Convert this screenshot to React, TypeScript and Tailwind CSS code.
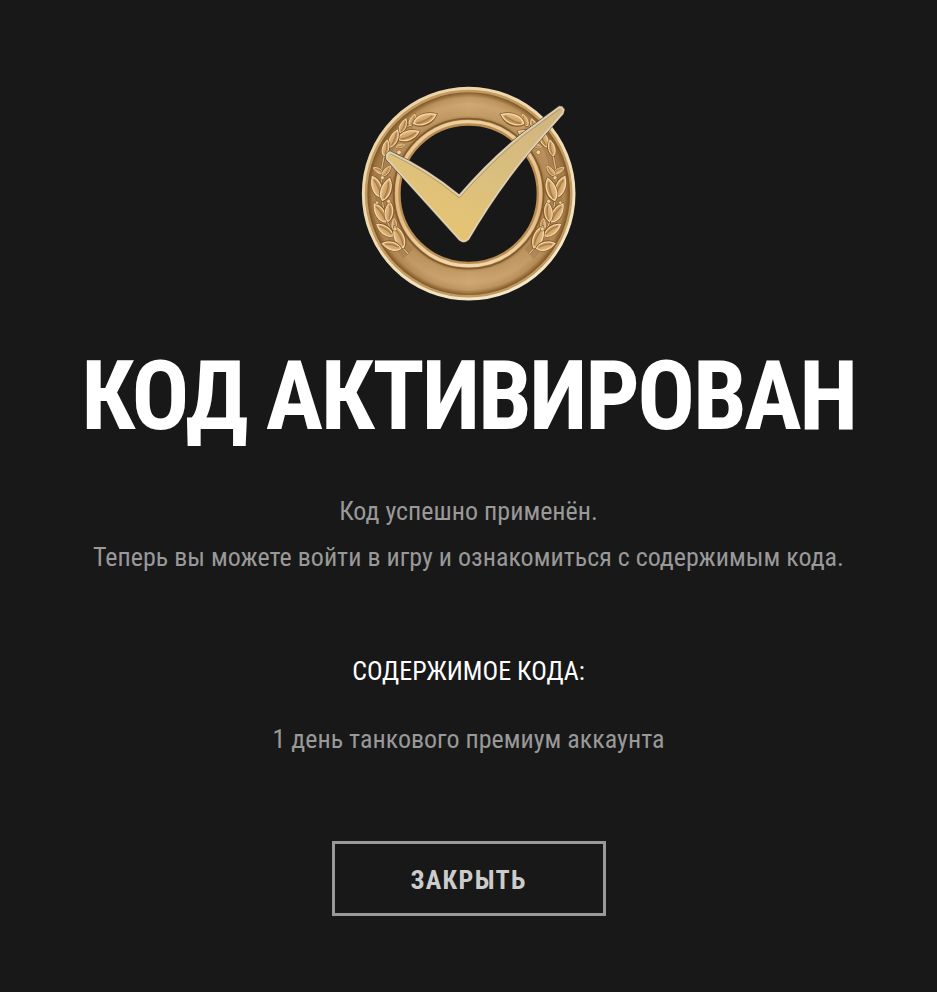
type Leaf = {
    angle: number;
    size: number;
    x: number;
    y: number;
};

const branchLeaves: Leaf[] = [
    { x: 186, y: 136, angle: -62, size: 0.6 },
    { x: 222, y: 133, angle: -18, size: 1.1 },
    { x: 158, y: 153, angle: -62, size: 0.7 },
    { x: 173, y: 182, angle: -16, size: 1.02 },
    { x: 130, y: 192, angle: -62, size: 0.86 },
    { x: 150, y: 213, angle: -10, size: 0.46 },
    { x: 106, y: 220, angle: -74, size: 0.74 },
    { x: 85, y: 287, angle: -146, size: 0.54 },
    { x: 108, y: 289, angle: -48, size: 0.6 },
    { x: 80, y: 337, angle: -108, size: 1.02 },
    { x: 107, y: 345, angle: -68, size: 1.06 },
    { x: 90, y: 415, angle: -118, size: 0.98 },
    { x: 116, y: 412, angle: -80, size: 0.88 },
    { x: 105, y: 466, angle: -140, size: 0.9 },
    { x: 132, y: 450, angle: -88, size: 0.6 },
    { x: 147, y: 488, angle: -108, size: 1.05 },
    { x: 125, y: 513, angle: -160, size: 0.88 }
];

const stemPath = 'M182 148 C125 175 96 230 93 300 C88 400 112 475 174 537';

const tickPath =
    'M119 231 Q232 283 327 362 Q416 258 515 178 L627 96 L634 97 L640 104 L637 115 Q585 174 541 225 Q440 345 354 492 Q342 505 328 494 Q222 376 110 252 Q105 236 119 231 Z';

const Branch = () => (
    <g>
        <path
            d={stemPath}
            fill="none"
            stroke="#805930"
            strokeWidth="40"
            strokeOpacity="0.25"
        />
        <path d={stemPath} fill="none" stroke="#76502a" strokeWidth="7" />
        <path d={stemPath} fill="none" stroke="#e2bd82" strokeWidth="4" />
        {branchLeaves.map((leaf) => (
            <g
                key={`${leaf.x}-${leaf.y}`}
                transform={`translate(${leaf.x} ${leaf.y}) rotate(${leaf.angle}) scale(${leaf.size})`}
            >
                <path
                    d="M-33 3 C-22 -18 10 -20 36 -3 C18 20 -14 22 -33 3 Z"
                    fill="#8a6234"
                    stroke="#84592b"
                    strokeWidth="5"
                />
                <path
                    d="M-31 2 C-20 -16 10 -18 34 -3 C18 15 -14 18 -31 2 Z"
                    fill="url(#leaf)"
                    stroke="#f2d6a4"
                    strokeWidth="4"
                />
                <path
                    d="M-24 4 C-8 6 10 3 24 -2"
                    fill="none"
                    stroke="#a87a44"
                    strokeWidth="4"
                />
            </g>
        ))}
        <g fill="#f0d09a" stroke="#8a6030" strokeWidth="2">
            <circle cx="146" cy="232" r="7" />
            <circle cx="96" cy="308" r="6" />
            <circle cx="115" cy="379" r="6" />
            <circle cx="80" cy="383" r="5" />
            <circle cx="134" cy="462" r="6" />
        </g>
    </g>
);

const Emblem = () => (
    <svg
        viewBox="32 33 645 645"
        className="size-[215px] shrink-0"
        aria-hidden="true"
    >
        <defs>
            <radialGradient
                id="band"
                gradientUnits="userSpaceOnUse"
                cx="355"
                cy="356"
                r="310"
            >
                <stop offset="0.71" stopColor="#9a713f" />
                <stop offset="0.76" stopColor="#c29a64" />
                <stop offset="0.86" stopColor="#cca672" />
                <stop offset="0.93" stopColor="#be955e" />
                <stop offset="0.97" stopColor="#8a6232" />
                <stop offset="1" stopColor="#6a4720" />
            </radialGradient>
            <linearGradient id="sides" x1="0" x2="1" y1="0" y2="0">
                <stop offset="0" stopColor="#7b4f1f" stopOpacity="0.28" />
                <stop offset="0.3" stopColor="#7b4f1f" stopOpacity="0.05" />
                <stop offset="0.5" stopColor="#e6bf86" stopOpacity="0.1" />
                <stop offset="0.75" stopColor="#7b4f1f" stopOpacity="0.05" />
                <stop offset="1" stopColor="#7b4f1f" stopOpacity="0.25" />
            </linearGradient>
            <linearGradient id="rim" x1="0.2" x2="0.8" y1="0" y2="1">
                <stop offset="0" stopColor="#ecd3a6" />
                <stop offset="0.5" stopColor="#efdcb4" />
                <stop offset="1" stopColor="#f3e9cd" />
            </linearGradient>
            <linearGradient id="innerRim" x1="0" x2="0" y1="0" y2="1">
                <stop offset="0" stopColor="#ecd0a0" />
                <stop offset="0.6" stopColor="#e0ba82" />
                <stop offset="1" stopColor="#f0d8ae" />
            </linearGradient>
            <linearGradient id="leaf" x1="0" x2="0" y1="0" y2="1">
                <stop offset="0" stopColor="#e3bc82" />
                <stop offset="1" stopColor="#bd8b50" />
            </linearGradient>
            <linearGradient
                id="tick"
                gradientUnits="userSpaceOnUse"
                x1="500"
                x2="340"
                y1="120"
                y2="500"
            >
                <stop offset="0" stopColor="#d2b67f" />
                <stop offset="0.5" stopColor="#dbbf7e" />
                <stop offset="1" stopColor="#e6c472" />
            </linearGradient>
        </defs>

        <g fill="none">
            <circle
                cx="355"
                cy="356"
                r="262"
                stroke="url(#band)"
                strokeWidth="96"
            />
            <circle
                cx="355"
                cy="356"
                r="262"
                stroke="url(#sides)"
                strokeWidth="96"
            />
            <circle
                cx="355"
                cy="356"
                r="311"
                stroke="#c39a60"
                strokeWidth="14"
            />
            <circle
                cx="355"
                cy="356"
                r="316"
                stroke="url(#rim)"
                strokeWidth="9"
            />
            <circle
                cx="355"
                cy="356"
                r="225"
                stroke="#835a2c"
                strokeWidth="5"
            />
            <circle
                cx="355"
                cy="356"
                r="213"
                stroke="#bb8c50"
                strokeWidth="18"
            />
            <circle
                cx="355"
                cy="356"
                r="216"
                stroke="url(#innerRim)"
                strokeWidth="10"
            />
        </g>

        <Branch />
        <g transform="translate(710 0) scale(-1 1)">
            <Branch />
        </g>

        <path d={tickPath} fill="none" stroke="#57432b" strokeWidth="8" />
        <path
            d={tickPath}
            fill="url(#tick)"
            stroke="#ddd2bd"
            strokeWidth="5"
        />
        <path
            d="M121 237 Q231 289 327 369 Q419 264 518 183 L628 102"
            fill="none"
            stroke="#9c8a6c"
            strokeWidth="2"
        />
    </svg>
);

export default function App() {
    return (
        <main className="flex min-h-screen flex-col items-center bg-[#181818] px-6 pt-[86px] pb-[76px] text-center font-['Roboto_Condensed','Liberation_Sans_Narrow',Roboto,sans-serif] text-[26px] leading-[46px] text-[#999999]">
            <Emblem />
            <h1 className="mt-[39px] text-[96px] leading-[112px] font-bold tracking-tight text-white uppercase">
                Код активирован
            </h1>
            <div className="mt-9">
                <p>Код успешно применён.</p>
                <p>Теперь вы можете войти в игру и ознакомиться с содержимым кода.</p>
            </div>
            <h2 className="mt-[68px] text-white uppercase">Содержимое кода:</h2>
            <p className="mt-[22px]">1 день танкового премиум аккаунта</p>
            <button
                type="button"
                className="mt-[79px] h-[75px] w-[274px] border-3 border-[#999999] pt-0.5 font-bold tracking-wider text-[#cccccc] uppercase hover:border-white hover:text-white"
            >
                Закрыть
            </button>
        </main>
    );
}
